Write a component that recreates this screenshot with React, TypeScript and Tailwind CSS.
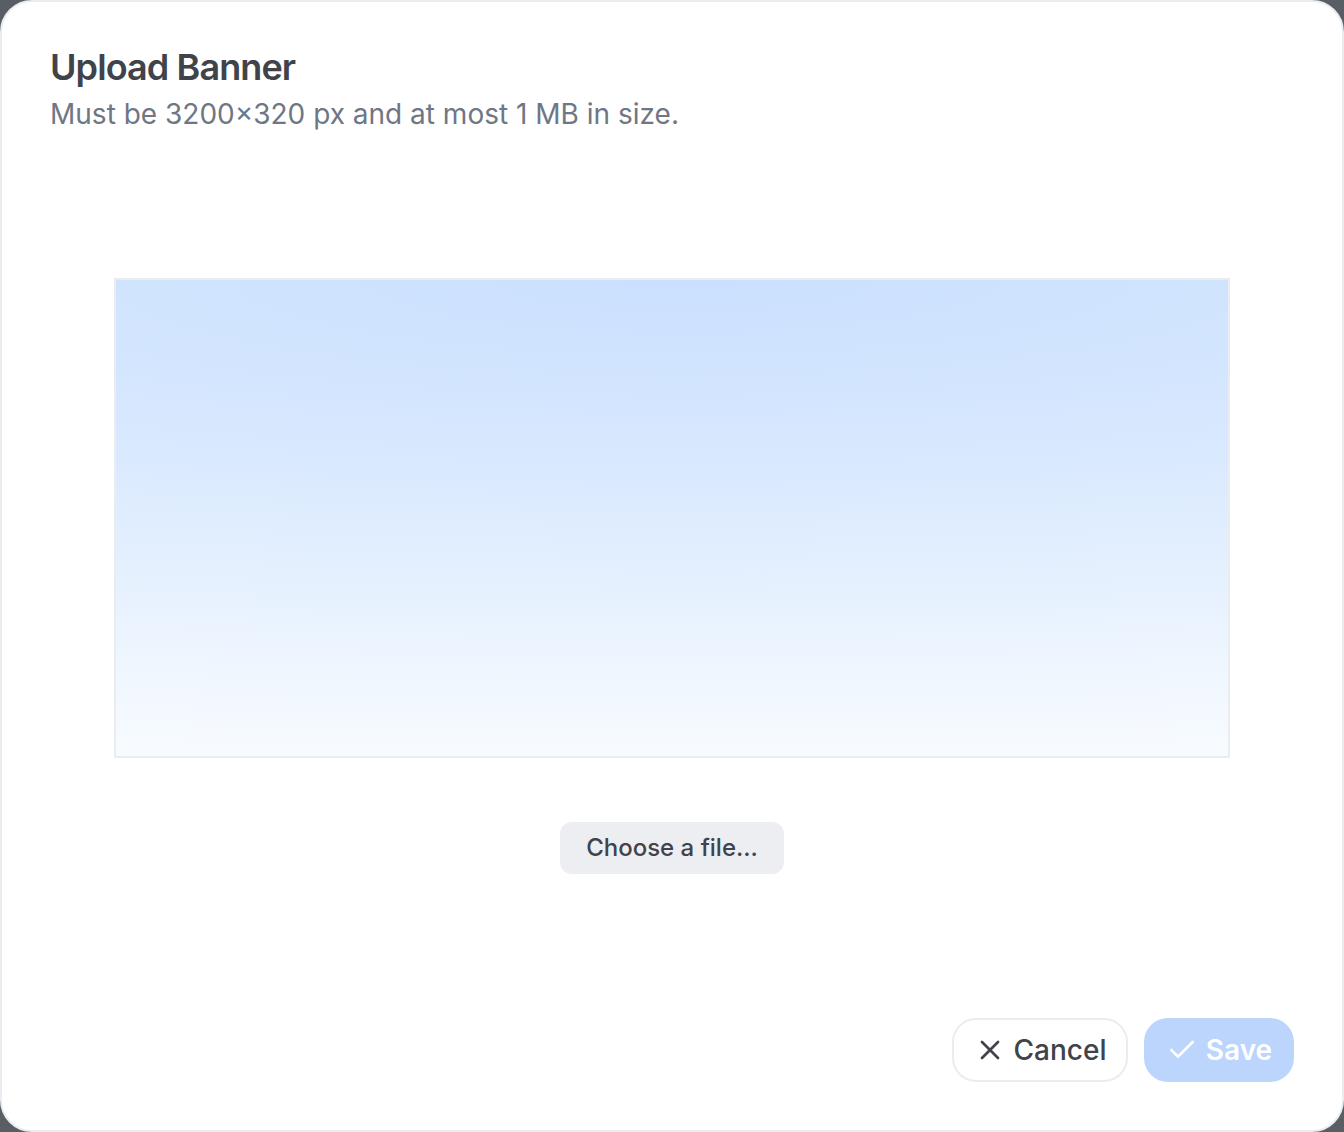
import { Check, X } from "lucide-react";

export default function App() {
  return (
    <div className="h-[1132px] w-[1344px] bg-[#595d64] font-['Inter',sans-serif]">
      <div className="flex h-full flex-col rounded-[32px] border-2 border-[#e9edf2] bg-white px-[48px] pb-[48px] pt-[45px]">
        <h1 className="text-[36px] font-semibold leading-[40px] tracking-[-0.9px] text-[#40434a]">
          Upload Banner
        </h1>
        <p className="mt-[7px] text-[28px] leading-[40px] text-[#6f7684]">
          Must be 3200×320 px and at most 1 MB in size.
        </p>

        <div className="mt-[144px] flex flex-col items-center">
          <div className="h-[480px] w-[1116px] border-2 border-[#e9edf2] bg-[radial-gradient(ellipse_260%_100%_at_51%_0%,#cae0fe,#d9e9fe_40%,#f7fbff)]" />
          <button className="mt-[64px] h-[52px] w-[224px] rounded-[12px] bg-[#edeef2] text-[24px] font-medium text-[#40434a]">
            Choose a file...
          </button>
        </div>

        <div className="mt-auto flex justify-end gap-[16px]">
          <button className="flex h-[64px] w-[176px] items-center justify-center gap-[8px] rounded-[24px] border-2 border-[#e9edf2] bg-white text-[28px] font-medium text-[#40434a]">
            <X className="h-[32px] w-[32px]" strokeWidth={2} />
            Cancel
          </button>
          <button className="flex h-[64px] w-[150px] items-center justify-center gap-[8px] rounded-[24px] bg-[#bbd5fc] text-[28px] font-semibold text-white">
            <Check className="h-[32px] w-[32px]" strokeWidth={2} />
            Save
          </button>
        </div>
      </div>
    </div>
  );
}
